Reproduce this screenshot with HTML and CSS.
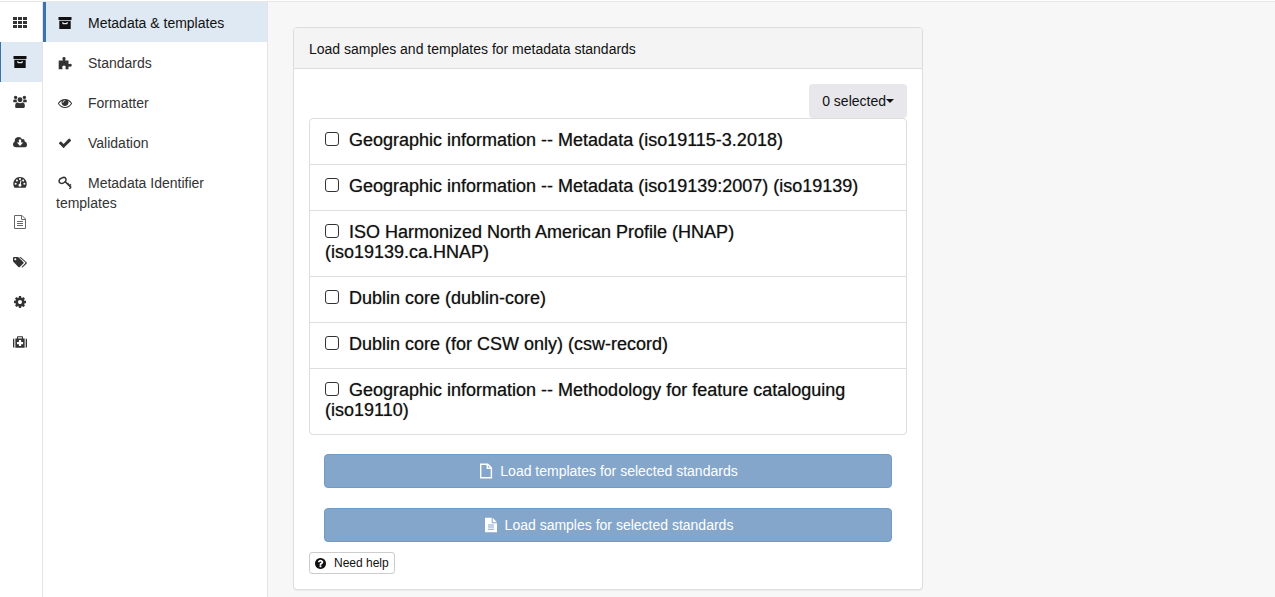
FILE: index.html
```html
<!DOCTYPE html>
<html lang="en">
<head>
<meta charset="utf-8">
<title>Metadata &amp; templates</title>
<meta name="viewport" content="width=device-width, initial-scale=1">
<link rel="stylesheet" href="styles.css">
</head>
<body>
<svg class="symbols" aria-hidden="true">
  <symbol id="archive" viewBox="0 0 14 14"><path d="M.5 1h13v3H.5z"/><path fill-rule="evenodd" d="M1.300 4.700h11.400V13H1.300zM4.300 6v1.200q0 1 1 1h3.400q1 0 1-1V6H8.600v1H5.400V6z"/></symbol>
  <symbol id="grid" viewBox="0 0 14 14"><path d="M0 2h4v3H0zM5 2h4v3H5zM10 2h4v3h-4zM0 6h4v3H0zM5 6h4v3H5zM10 6h4v3h-4zM0 10h4v3H0zM5 10h4v3H5zM10 10h4v3h-4z"/></symbol>
  <symbol id="users" viewBox="0 0 16 16"><circle cx="3" cy="2.800" r="1.900"/><circle cx="13" cy="2.800" r="1.900"/><circle cx="8" cy="5.500" r="2.800"/><path d="M.3 8V6.200Q.3 5 1.500 5h2.700q-.3 1.900.7 3.200H.8zM15.700 8V6.200q0-1.200-1.200-1.200h-2.700q.3 1.900-.7 3.200h4.100zM2.500 14.500v-3q0-2.900 2.700-2.900 2.800 1.600 5.600 0 2.700 0 2.700 2.900v2q0 1.300-1.300 1.300H3.800q-1.300 0-1.300-.8z"/></symbol>
  <symbol id="cloud" viewBox="0 0 16 16"><path fill-rule="evenodd" d="M3.500 14Q0 14 0 10.700q0-2 1.900-3Q1.600 2.500 6.200 2.200q3-.1 4.200 2.600 2.600-.8 3.100 2.700Q16 8.200 16 11q0 3-3.300 3zM6.700 5v3.500H4.300l3.700 4 3.700-4H9.300V5z"/></symbol>
  <symbol id="gauge" viewBox="0 0 16 16"><path fill-rule="evenodd" d="M1.600 14.500Q-.9 10 1.300 6.200 3.600 2.300 8 2.300t6.700 3.900q2.200 3.800-.3 8.300zM3 8.800a1.200 1.200 0 1 0 0 2.400 1.200 1.200 0 0 0 0-2.400zM4.500 5.100a1.200 1.200 0 1 0 0 2.400 1.200 1.200 0 0 0 0-2.400zM8 3.500a1.200 1.200 0 1 0 0 2.400 1.200 1.200 0 0 0 0-2.400zM11.600 5.100a1.200 1.200 0 1 0 0 2.400 1.200 1.200 0 0 0 0-2.400zM13 8.800a1.200 1.200 0 1 0 0 2.400 1.200 1.200 0 0 0 0-2.400zM8.600 6.300L7.700 10q-1.500.3-1.500 1.700 0 1.700 1.700 1.700t1.800-1.700q0-.9-.8-1.400l.8-3.700z"/></symbol>
  <symbol id="file-lines" viewBox="0 0 14 14"><path class="outline" d="M1.500.5h7.500l3.500 3.500v9.500h-11zM8.500.5v4h4M4 6.500h6M4 8.500h6M4 10.500h6"/></symbol>
  <symbol id="tags" viewBox="0 0 16 16"><path fill-rule="evenodd" d="M0 3.500Q0 2.300 1.200 2.300h4q.9 0 1.600.7l5 5q.8.800 0 1.600l-4 4q-.8.800-1.600 0L.9 8.200Q0 7.500 0 6.600zM2.600 3.700a1.200 1.200 0 1 0 0 2.400 1.200 1.200 0 0 0 0-2.400z"/><path d="M7 2.300h1.300q.8 0 1.500.7l5.600 5.400q.8.800 0 1.600l-4.200 4q-.7.700-1.500-.1l4-4.200q.8-.8 0-1.600z"/></symbol>
  <symbol id="cog" viewBox="128 128 1536 1536"><path d="M1152 896q0-106-75-181t-181-75-181 75-75 181 75 181 181 75 181-75 75-181zm512-109v222q0 12-8 23t-20 13l-185 28q-19 54-39 91 35 50 107 138 10 12 10 25t-9 23q-27 37-99 108t-94 71q-12 0-26-9l-138-108q-44 23-91 38-16 136-29 186-7 28-36 28h-222q-14 0-24.500-8.500t-11.500-21.500l-28-184q-49-16-90-37l-141 107q-10 9-25 9-14 0-25-11-126-114-165-168-7-10-7-23 0-12 8-23 15-21 51-66.500t54-70.500q-27-50-41-99l-183-27q-13-2-21-12.500t-8-23.500v-222q0-12 8-23t19-13l186-28q14-46 39-92-40-57-107-138-10-12-10-24 0-10 9-23 26-36 98.500-107.500t94.500-71.500q13 0 26 10l138 107q44-23 91-38 16-136 29-186 7-28 36-28h222q14 0 24.500 8.500t11.500 21.500l28 184q49 16 90 37l142-107q9-9 24-9 13 0 25 10 129 119 165 170 7 8 7 22 0 12-8 23-15 21-51 66.500t-54 70.500q26 50 41 98l183 28q13 2 21 12.500t8 23.500z"/></symbol>
  <symbol id="medkit" viewBox="0 0 16 16"><path fill-rule="evenodd" d="M0 5.500Q0 4 1.500 4v10.500Q0 14.500 0 13zM16 5.500Q16 4 14.500 4v10.500q1.500 0 1.500-1.500zM2.700 4h1.800V2.500q0-1 1-1h5q1 0 1 1V4h1.800v10.500H2.700zM5.800 2.700V4h4.400V2.700zM6.800 5.800V8H4.600v2.500h2.200v2.200h2.500v-2.200h2.200V8H9.300V5.800z"/></symbol>
  <symbol id="puzzle" viewBox="0 0 14 14"><path d="M.7 4.600h3.700q.8 0 .4-.8Q4.200 3 4.400 2.300 4.700 1 6 1t1.600 1.300q.2.700-.4 1.500-.4.800.4.800h2.900v3.200q.2.600 1 .2 2-.7 2.300 1.300-.2 2-2.300 1.300-.8-.4-1 .2V13.300H7.700q-.6-.2-.2-.9Q8.200 11 7.300 10q-1.300-1-2.600 0-1 1-.2 2.400.4.700-.3.900H.7z"/></symbol>
  <symbol id="eye" viewBox="0 0 1792 1792"><path d="M1664 960q-152-236-381-353 61 104 61 225 0 185-131.500 316.500t-316.500 131.500-316.500-131.500-131.500-316.500q0-121 61-225-229 117-381 353 133 205 333.500 326.500t434.500 121.500 434.500-121.500 333.500-326.500zm-720-384q0-20-14-34t-34-14q-125 0-214.500 89.500t-89.500 214.500q0 20 14 34t34 14 34-14 14-34q0-86 61-147t147-61q20 0 34-14t14-34zm848 384q0 34-20 69-140 230-376.500 368.500t-499.500 138.500-499.500-139-376.500-368q-20-35-20-69t20-69q140-229 376.500-368t499.500-139 499.500 139 376.500 368q20 35 20 69z"/></symbol>
  <symbol id="check" viewBox="0 0 1792 1792"><path d="M1671 566q0 40-28 68l-724 724-136 136q-28 28-68 28t-68-28l-136-136-362-362q-28-28-28-68t28-68l136-136q28-28 68-28t68 28l294 295 656-657q28-28 68-28t68 28l136 136q28 28 28 68z"/></symbol>
  <symbol id="key" viewBox="0 0 14 14"><path class="key-line" d="M4.400 1.700q2-.8 3.100.4t.2 2.900L6.500 6.300q-1.600 1.400-3.600 1Q.9 6.800 1 5q.2-2.300 3.400-3.300zM7.200 5.600l6 6M12.900 8.400L11 10.300M10.700 7.400L9.300 8.800M13 11.200l-1.600 1.600"/></symbol>
  <symbol id="file" viewBox="0 0 16 16"><path class="file-line" d="M2.700 1.200H9.700l3.700 3.700v9.900H2.700zM9.300 1.200v4h4"/></symbol>
  <symbol id="file-solid" viewBox="0 0 16 16"><path fill-rule="evenodd" d="M2 .8h6.700v5.500H14v8.900H2zM5 7.500v1h6v-1zM5 9.600v1h6v-1zM5 11.700v1h6v-1z"/><path d="M9.700.8L14 5.200H9.700z"/></symbol>
  <symbol id="help" viewBox="128 128 1536 1536"><path d="M1024 1376v-192q0-14-9-23t-23-9h-192q-14 0-23 9t-9 23v192q0 14 9 23t23 9h192q14 0 23-9t9-23zm256-672q0-88-55.500-163t-138.500-116-170-41q-243 0-371 213-15 24 8 42l132 100q7 6 19 6 16 0 25-12 53-68 86-92 34-24 86-24 48 0 85.500 26t37.500 59q0 38-20 61t-68 45q-63 28-115.500 86.500t-52.500 125.500v36q0 14 9 23t23 9h192q14 0 23-9t9-23q0-19 21.500-49.500t54.500-49.500q32-18 49-28.500t46-35 44.500-48 28-60.500 12.500-81zm384 192q0 209-103 385.500t-279.500 279.500-385.500 103-385.500-103-279.500-279.500-103-385.500 103-385.500 279.500-279.500 385.500-103 385.500 103 279.500 279.500 103 385.500z"/></symbol>
</svg>
<div class="app">
  <nav class="rail" aria-label="Administration">
    <a href="#" aria-label="Dashboard"><svg class="icon"><use href="#grid"/></svg></a>
    <a href="#" class="active" aria-label="Metadata and templates"><svg class="icon"><use href="#archive"/></svg></a>
    <a href="#" aria-label="Users and groups"><svg class="icon"><use href="#users"/></svg></a>
    <a href="#" aria-label="Harvesting"><svg class="icon"><use href="#cloud"/></svg></a>
    <a href="#" aria-label="Statistics"><svg class="icon"><use href="#gauge"/></svg></a>
    <a href="#" aria-label="Reports"><svg class="icon"><use href="#file-lines"/></svg></a>
    <a href="#" aria-label="Classification systems"><svg class="icon"><use href="#tags"/></svg></a>
    <a href="#" aria-label="Settings"><svg class="icon small"><use href="#cog"/></svg></a>
    <a href="#" aria-label="Tools"><svg class="icon"><use href="#medkit"/></svg></a>
  </nav>
  <nav class="menu" aria-label="Metadata and templates">
    <a href="#" class="active"><svg class="icon"><use href="#archive"/></svg>Metadata &amp; templates</a>
    <a href="#"><svg class="icon"><use href="#puzzle"/></svg>Standards</a>
    <a href="#"><svg class="icon"><use href="#eye"/></svg>Formatter</a>
    <a href="#"><svg class="icon"><use href="#check"/></svg>Validation</a>
    <a href="#"><svg class="icon"><use href="#key"/></svg>Metadata Identifier templates</a>
  </nav>
  <main class="content">
    <section class="panel">
      <h1 class="panel-heading">Load samples and templates for metadata standards</h1>
      <div class="panel-body">
        <div class="toolbar">
          <button type="button" class="selection">0 selected<span class="caret"></span></button>
        </div>
        <ul class="standards">
          <li><label><input type="checkbox">Geographic information -- Metadata (iso19115-3.2018)</label></li>
          <li><label><input type="checkbox">Geographic information -- Metadata (iso19139:2007) (iso19139)</label></li>
          <li><label><input type="checkbox">ISO Harmonized North American Profile (HNAP) (iso19139.ca.HNAP)</label></li>
          <li><label><input type="checkbox">Dublin core (dublin-core)</label></li>
          <li><label><input type="checkbox">Dublin core (for CSW only) (csw-record)</label></li>
          <li><label><input type="checkbox">Geographic information -- Methodology for feature cataloguing (iso19110)</label></li>
        </ul>
        <div class="actions">
          <button type="button" class="primary"><svg class="icon"><use href="#file"/></svg>Load templates for selected standards</button>
          <button type="button" class="primary"><svg class="icon"><use href="#file-solid"/></svg>Load samples for selected standards</button>
        </div>
        <button type="button" class="help"><svg class="icon small"><use href="#help"/></svg>Need help</button>
      </div>
    </section>
  </main>
</div>
</body>
</html>
```
FILE: styles.css
```css
* { box-sizing: border-box; }
body {
  margin: 0;
  padding-top: 1px;
  background: #fff;
  color: #111;
  font: 14px/20px "Liberation Sans", Arial, sans-serif;
}
button, input { font: inherit; color: inherit; }
.symbols { display: none; }
.icon { width: 14px; height: 14px; fill: currentColor; flex: none; }
.icon.small { width: 12px; height: 12px; }
.outline { fill: none; stroke: #666; stroke-width: 1; }
.key-line { fill: none; stroke: currentColor; stroke-width: 1.5; }
.file-line { fill: none; stroke: currentColor; stroke-width: 1.4; }

.app {
  display: grid;
  grid-template-columns: 43px 225px 1fr;
  min-height: calc(100vh - 1px);
  border-top: 1px solid #e7e7e7;
}
.rail, .menu { border-right: 1px solid #e4e4e4; }
.rail a {
  display: flex;
  align-items: center;
  justify-content: center;
  height: 40px;
  padding-right: 3px;
  border-left: 1px solid transparent;
  color: #333;
}
.menu a {
  display: block;
  padding: 11px 13px 9px 10px;
  border-left: 3px solid transparent;
  color: #333;
  text-decoration: none;
}
.menu .icon { margin: 0 16px 0 2px; vertical-align: -2px; }
.rail .active, .menu .active {
  background: #dfe9f3;
  border-left-color: #3b73af;
  color: #111;
}

.content {
  display: grid;
  grid-template-columns: 2fr 1fr;
  align-items: start;
  gap: 12px;
  padding: 25px 25px 6px;
  background: #f7f7f7;
}
.panel {
  border: 1px solid #ddd;
  border-radius: 4px;
  background: #fff;
  box-shadow: 0 1px 1px rgba(0, 0, 0, .05);
}
.panel-heading {
  margin: 0;
  padding: 11px 15px 9px;
  border-bottom: 1px solid #ddd;
  border-radius: 3px 3px 0 0;
  background: #f4f4f4;
  font-size: 14px;
  font-weight: 400;
}
.panel-body { padding: 15px; }
.toolbar { display: flex; justify-content: flex-end; }
.selection {
  display: flex;
  align-items: center;
  height: 34px;
  padding: 0 13px;
  border: 0;
  border-radius: 4px;
  background: #e7e7ec;
}
.caret {
  border: 4px solid transparent;
  border-top-color: currentColor;
  border-bottom: 0;
}
.standards {
  margin: 0;
  padding: 0;
  border: 1px solid #ddd;
  border-radius: 4px;
  list-style: none;
  font-size: 18px;
  text-shadow: 0 0 1px rgba(0, 0, 0, .5);
}
.standards li { padding: 11px 15px 14px; }
.standards li + li { border-top: 1px solid #ddd; }
.standards label { display: block; }
.standards input {
  appearance: none;
  width: 14px;
  height: 14px;
  margin: 0 10px 0 0;
  border: 1px solid #333;
  border-radius: 3px;
  background: #fff;
}
.standards input:checked { background: #3b73af; }
.actions {
  display: grid;
  gap: 20px;
  padding: 19px 15px 10px;
}
.primary {
  display: flex;
  align-items: center;
  justify-content: center;
  gap: 6px;
  height: 34px;
  border: 1px solid #709bc6;
  border-radius: 4px;
  background: #84a6cb;
  color: #fff;
}
.primary .icon { width: 16px; height: 16px; }
.help {
  display: flex;
  align-items: center;
  gap: 8px;
  height: 22px;
  padding: 0 5px;
  border: 1px solid #ccc;
  border-radius: 3px;
  background: #fff;
  font-size: 12px;
}
.help .icon { width: 11px; height: 11px; }
```
